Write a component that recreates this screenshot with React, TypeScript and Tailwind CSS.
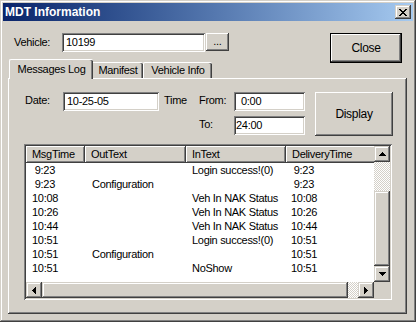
import type { ReactNode } from "react";

const raised =
  "shadow-[inset_-1px_-1px_#404040,inset_1px_1px_#ffffff,inset_-2px_-2px_#808080,inset_2px_2px_#d4d0c8]";
const sbButton =
  "shadow-[inset_-1px_-1px_#404040,inset_1px_1px_#d4d0c8,inset_-2px_-2px_#808080,inset_2px_2px_#ffffff]";
const sunken =
  "shadow-[inset_1px_1px_#808080,inset_-1px_-1px_#ffffff,inset_2px_2px_#404040,inset_-2px_-2px_#d4d0c8]";
const checker =
  "bg-[image:repeating-conic-gradient(#ffffff_0_25%,#d4d0c8_0_50%)] bg-[length:2px_2px]";

const rows: [string, string, string, string][] = [
  [" 9:23", "", "Login success!(0)", " 9:23"],
  [" 9:23", "Configuration", "", " 9:23"],
  ["10:08", "", "Veh In NAK Status", "10:08"],
  ["10:26", "", "Veh In NAK Status", "10:26"],
  ["10:44", "", "Veh In NAK Status", "10:44"],
  ["10:51", "", "Login success!(0)", "10:51"],
  ["10:51", "Configuration", "", "10:51"],
  ["10:51", "", "NoShow", "10:51"],
];

const columns = [
  { label: "MsgTime", width: "w-[59px]", pad: "pl-[6px]" },
  { label: "OutText", width: "w-[101px]", pad: "pl-[7px]" },
  { label: "InText", width: "w-[100px]", pad: "pl-[6px]" },
  { label: "DeliveryTime", width: "w-[100px]", pad: "pl-[5px]" },
];

const Arrow = ({ dir }: { dir: "up" | "down" | "left" | "right" }) => {
  const paths = {
    up: "M3 0h1v1h-1zM2 1h3v1h-3zM1 2h5v1h-5zM0 3h7v1h-7z",
    down: "M0 0h7v1h-7zM1 1h5v1h-5zM2 2h3v1h-3zM3 3h1v1h-1z",
    left: "M3 0h1v7h-1zM2 1h1v5h-1zM1 2h1v3h-1zM0 3h1v1h-1z",
    right: "M0 0h1v7h-1zM1 1h1v5h-1zM2 2h1v3h-1zM3 3h1v1h-1z",
  };
  const vertical = dir === "up" || dir === "down";
  return (
    <svg
      width={vertical ? 7 : 4}
      height={vertical ? 4 : 7}
      viewBox={vertical ? "0 0 7 4" : "0 0 4 7"}
      shapeRendering="crispEdges"
    >
      <path d={paths[dir]} fill="#000" />
    </svg>
  );
};

const Field = ({ value, className }: { value: string; className: string }) => (
  <div className={`${className} ${sunken} bg-white flex items-center text-black`}>
    {value}
  </div>
);

const Button = ({ children, className }: { children: ReactNode; className: string }) => (
  <div className={`${className} ${raised} bg-[#d4d0c8] flex items-center justify-center`}>
    {children}
  </div>
);

export default function App() {
  return (
    <div
      className={`w-[416px] h-[322px] bg-[#d4d0c8] p-[3px] flex flex-col font-['Liberation_Sans',Arial,sans-serif] text-[11px] tracking-[-0.3px] text-black shadow-[inset_-1px_-1px_#404040,inset_1px_1px_#d4d0c8,inset_-2px_-2px_#808080,inset_2px_2px_#ffffff]`}
    >
      {/* title bar */}
      <div className="h-[18px] shrink-0 flex items-center bg-linear-to-r from-[#0a246a] to-[#a6caf0] pl-[2px] pr-[2px]">
        <span className="text-white font-bold text-[12px] tracking-normal">MDT Information</span>
        <div className={`ml-auto w-[16px] h-[14px] bg-[#d4d0c8] ${sbButton} flex items-center justify-center`}>
          <svg width="8" height="7" viewBox="0 0 8 7" shapeRendering="crispEdges">
            <path
              d="M0 0h2v1h-2zM6 0h2v1h-2zM1 1h2v1h-2zM5 1h2v1h-2zM2 2h4v1h-4zM3 3h2v1h-2zM2 4h4v1h-4zM1 5h2v1h-2zM5 5h2v1h-2zM0 6h2v1h-2zM6 6h2v1h-2z"
              fill="#000"
            />
          </svg>
        </div>
      </div>

      {/* vehicle row */}
      <div className="flex items-start mt-[12px] pl-[11px] pr-[11px]">
        <div className="w-[48px] h-[19px] flex items-center">Vehicle:</div>
        <Field value="10199" className="w-[143px] h-[19px] pl-[4px]" />
        <Button className="ml-[1px] w-[23px] h-[18px] pb-[2px]">...</Button>
        <div className={`ml-auto w-[72px] h-[30px] mb-[-4px] border border-black bg-[#d4d0c8] ${raised} flex items-center justify-center text-[12px]`}>
          Close
        </div>
      </div>

      {/* tabs */}
      <div className="ml-[5px] mr-[6px] flex flex-col">
        <div className="h-[19px] flex items-end">
          <div className="relative z-10 ml-[1px] w-[84px] h-[20px] mb-[-1px] bg-[#d4d0c8] border-l border-t border-white rounded-tl-[2px] rounded-tr-[2px] shadow-[inset_-1px_0_#404040,inset_-2px_0_#808080] flex items-center justify-center pb-[1px]">
            Messages Log
          </div>
          <div className="w-[50px] h-[16px] bg-[#d4d0c8] border-t border-white rounded-tr-[2px] shadow-[inset_-1px_0_#404040,inset_-2px_0_#808080] flex items-center justify-center">
            Manifest
          </div>
          <div className="w-[69px] h-[16px] bg-[#d4d0c8] border-l border-t border-white rounded-tl-[2px] rounded-tr-[2px] shadow-[inset_-1px_0_#404040,inset_-2px_0_#808080] flex items-center justify-center">
            Vehicle Info
          </div>
        </div>

        <div className="h-[236px] shadow-[inset_-1px_-1px_#404040,inset_1px_1px_#ffffff,inset_-2px_-2px_#808080] flex flex-col">
          {/* date / time row */}
          <div className="flex items-start mt-[14px] pl-[17px]">
            <div className="flex flex-col">
              <div className="flex items-center h-[19px]">
                <div className="w-[38px] pb-[3px]">Date:</div>
                <Field value="10-25-05" className="w-[96px] h-[19px] pl-[4px]" />
                <div className="ml-[5px] w-[35px] pb-[3px]">Time</div>
                <div className="w-[35px] pb-[3px]">From:</div>
                <Field value="0:00" className="w-[71px] h-[19px] pl-[7px]" />
              </div>
              <div className="flex items-center h-[19px] mt-[5px] pl-[174px]">
                <div className="w-[35px] pb-[3px]">To:</div>
                <Field value="24:00" className="w-[71px] h-[19px] pl-[2px]" />
              </div>
            </div>
            <Button className="ml-[10px] w-[78px] h-[44px] text-[12px]">Display</Button>
          </div>

          {/* list */}
          <div className={`mt-[8px] ml-[16px] w-[368px] h-[156px] p-[2px] ${sunken} bg-white`}>
            <div className="grid grid-cols-[348px_16px] grid-rows-[136px_16px] w-[364px] h-[152px]">
              <div className="overflow-hidden bg-white">
                <div className="flex h-[17px] w-[360px] bg-[#d4d0c8]">
                  {columns.map((c) => (
                    <div
                      key={c.label}
                      className={`${c.width} shrink-0 h-[17px] flex items-center pl-[6px] shadow-[inset_-1px_-1px_#404040,inset_1px_1px_#ffffff,inset_-2px_-2px_#808080]`}
                    >
                      {c.label}
                    </div>
                  ))}
                </div>
                {rows.map((r, i) => (
                  <div key={i} className="flex h-[14px] w-[360px]">
                    {r.map((cell, j) => (
                      <div
                        key={j}
                        className={`${columns[j].width} ${columns[j].pad} shrink-0 h-[14px] flex items-center whitespace-pre`}
                      >
                        {cell}
                      </div>
                    ))}
                  </div>
                ))}
              </div>

              {/* vertical scrollbar */}
              <div className="flex flex-col">
                <div className={`h-[16px] bg-[#d4d0c8] ${sbButton} flex items-center justify-center`}>
                  <Arrow dir="up" />
                </div>
                <div className={`h-[29px] ${checker}`} />
                <div className={`h-[75px] bg-[#d4d0c8] ${sbButton}`} />
                <div className={`h-[16px] bg-[#d4d0c8] ${sbButton} flex items-center justify-center`}>
                  <Arrow dir="down" />
                </div>
              </div>

              {/* horizontal scrollbar */}
              <div className="flex">
                <div className={`w-[16px] bg-[#d4d0c8] ${sbButton} flex items-center justify-center`}>
                  <Arrow dir="left" />
                </div>
                <div className={`w-[306px] bg-[#d4d0c8] ${sbButton}`} />
                <div className={`w-[10px] ${checker}`} />
                <div className={`w-[16px] bg-[#d4d0c8] ${sbButton} flex items-center justify-center`}>
                  <Arrow dir="right" />
                </div>
              </div>
              <div className="bg-[#d4d0c8]" />
            </div>
          </div>
        </div>
      </div>
    </div>
  );
}
